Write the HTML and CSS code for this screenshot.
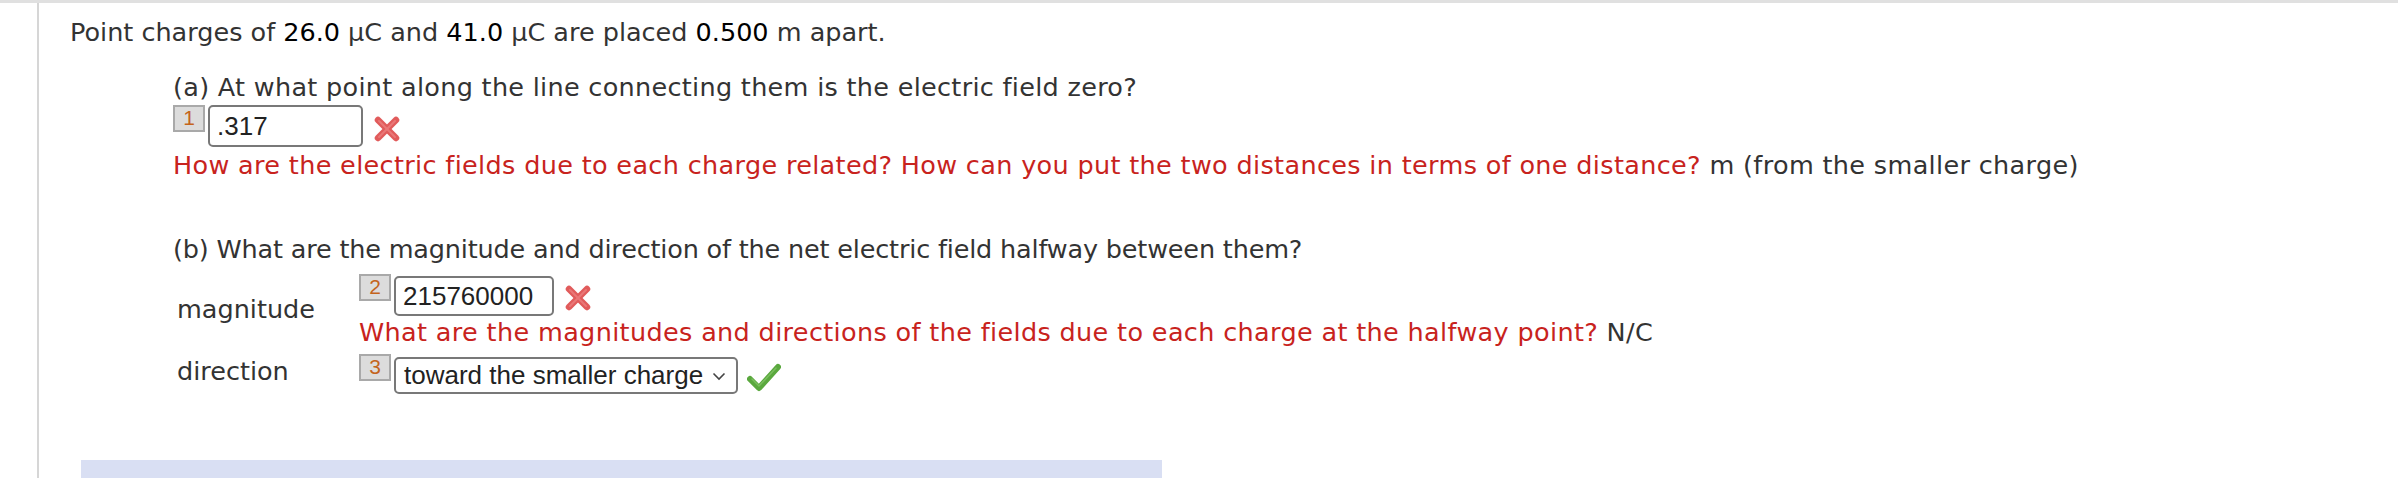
FILE: index.html
```html
<!DOCTYPE html>
<html>
<head>
<meta charset="utf-8">
<link rel="stylesheet" href="styles.css">
</head>
<body>
<div class="frame">
  <div class="panel">
    <p class="stem">Point charges of <span class="num">26.0</span> μC and <span class="num">41.0</span> μC are placed <span class="num2">0.500</span> m apart.</p>
    <div class="part">
      <p class="q qa">(a) At what point along the line connecting them is the electric field zero?</p>
      <div class="ansrow">
        <span class="qnum">1</span>
        <span class="field f1">.317</span>
        <svg class="mark" width="28" height="26" viewBox="0 0 28 26"><g stroke="#e15b5b" stroke-width="6.5" stroke-linecap="round"><line x1="5" y1="4" x2="23" y2="22"/><line x1="23" y1="4" x2="5" y2="22"/></g><g stroke="#f08a8a" stroke-width="2" stroke-linecap="round" opacity="0.6"><line x1="6" y1="5" x2="22" y2="21"/><line x1="22" y1="5" x2="6" y2="21"/></g></svg>
      </div>
      <p class="hint ha"><span class="red">How are the electric fields due to each charge related? How can you put the two distances in terms of one distance?</span> m (from the smaller charge)</p>
    </div>
    <div class="part partb">
      <p class="q qb">(b) What are the magnitude and direction of the net electric field halfway between them?</p>
      <div class="grid">
        <div class="lbl">magnitude</div>
        <div class="cell">
          <div class="ansrow">
            <span class="qnum">2</span>
            <span class="field f2">215760000</span>
            <svg class="mark" width="28" height="26" viewBox="0 0 28 26"><g stroke="#e15b5b" stroke-width="6.5" stroke-linecap="round"><line x1="5" y1="4" x2="23" y2="22"/><line x1="23" y1="4" x2="5" y2="22"/></g><g stroke="#f08a8a" stroke-width="2" stroke-linecap="round" opacity="0.6"><line x1="6" y1="5" x2="22" y2="21"/><line x1="22" y1="5" x2="6" y2="21"/></g></svg>
          </div>
          <p class="hint hb"><span class="red">What are the magnitudes and directions of the fields due to each charge at the halfway point?</span> N/C</p>
        </div>
        <div class="lbl">direction</div>
        <div class="cell">
          <div class="ansrow sel">
            <span class="qnum">3</span>
            <span class="field select">toward the smaller charge<svg class="chev" width="14" height="9" viewBox="0 0 14 9"><polyline points="1.5,1.5 7,7 12.5,1.5" fill="none" stroke="#444" stroke-width="1.6"/></svg></span>
            <svg class="check" width="34" height="30" viewBox="0 0 34 30"><path d="M3 16 L12 25 L31 4" fill="none" stroke="#5aa83e" stroke-width="6" stroke-linecap="round" stroke-linejoin="round"/><path d="M5 16 L12 23 L29 5" fill="none" stroke="#86c86a" stroke-width="1.5" stroke-linecap="round" opacity="0.7"/></svg>
          </div>
        </div>
      </div>
    </div>
    <div class="bar"></div>
  </div>
</div>
</body>
</html>
```

FILE: styles.css
```css
html, body {
  margin: 0;
  padding: 0;
  background: #fff;
}
body {
  font-family: "DejaVu Sans", Verdana, sans-serif;
  font-size: 25.5px;
  color: #333;
  overflow: hidden;
}
.frame {
  border-top: 3px solid #e0e0e0;
  height: 475px;
}
.panel {
  margin-left: 37px;
  border-left: 2px solid #d6d6d6;
  height: 475px;
  padding-left: 31px;
  padding-top: 14px;
  box-sizing: border-box;
}
p {
  margin: 0;
}
.stem {
  line-height: 30px;
}
.num, .num2 {
  color: #000;
}
.part {
  margin-left: 103px;
}
.q {
  line-height: 30px;
}
.qa {
  letter-spacing: 0.3px;
}
.qb {
  letter-spacing: -0.17px;
}
.part > .q {
  margin-top: 25px;
}
.ansrow {
  display: flex;
  align-items: center;
  margin-top: 3px;
}
.qnum {
  align-self: flex-start;
  box-sizing: border-box;
  width: 32px;
  height: 27px;
  background: #dcdcdc;
  border: 2px solid #a9a9a9;
  color: #c4641c;
  font-family: "Liberation Sans", Arial, sans-serif;
  font-size: 21px;
  line-height: 22px;
  text-align: center;
  margin-right: 3px;
}
.field {
  box-sizing: border-box;
  display: flex;
  align-items: center;
  height: 42px;
  border: 2px solid #787878;
  border-radius: 5px;
  background: #fff;
  font-family: "Liberation Sans", Arial, sans-serif;
  font-size: 26px;
  color: #222;
  padding-left: 7px;
}
.f1 {
  width: 155px;
}
.f2 {
  width: 160px;
  height: 40px;
  margin-top: 2px;
}
.mark {
  margin-left: 10px;
  margin-top: 6px;
}
.hint {
  line-height: 30px;
  margin-top: 3px;
}
.ha {
  letter-spacing: 0.34px;
}
.hb {
  letter-spacing: 0.35px;
}
.red {
  color: #c8231d;
}
.partb > .q {
  margin-top: 54px;
}
.grid {
  display: grid;
  grid-template-columns: 186px auto;
  align-items: center;
  margin-top: 7px;
}
.lbl {
  padding-left: 4px;
}
.hint.hb {
  margin-top: 1px;
}
.sel {
  margin-top: 7px;
}
.select {
  width: 344px;
  height: 37px;
  margin-top: 3px;
  padding-left: 8px;
  padding-right: 10px;
  justify-content: space-between;
}
.chev {
  margin-top: 2px;
}
.check {
  margin-left: 9px;
  margin-top: 8px;
}
.bar {
  margin-top: 66px;
  margin-left: 11px;
  width: 1081px;
  height: 30px;
  background: #d9dff3;
}
```
